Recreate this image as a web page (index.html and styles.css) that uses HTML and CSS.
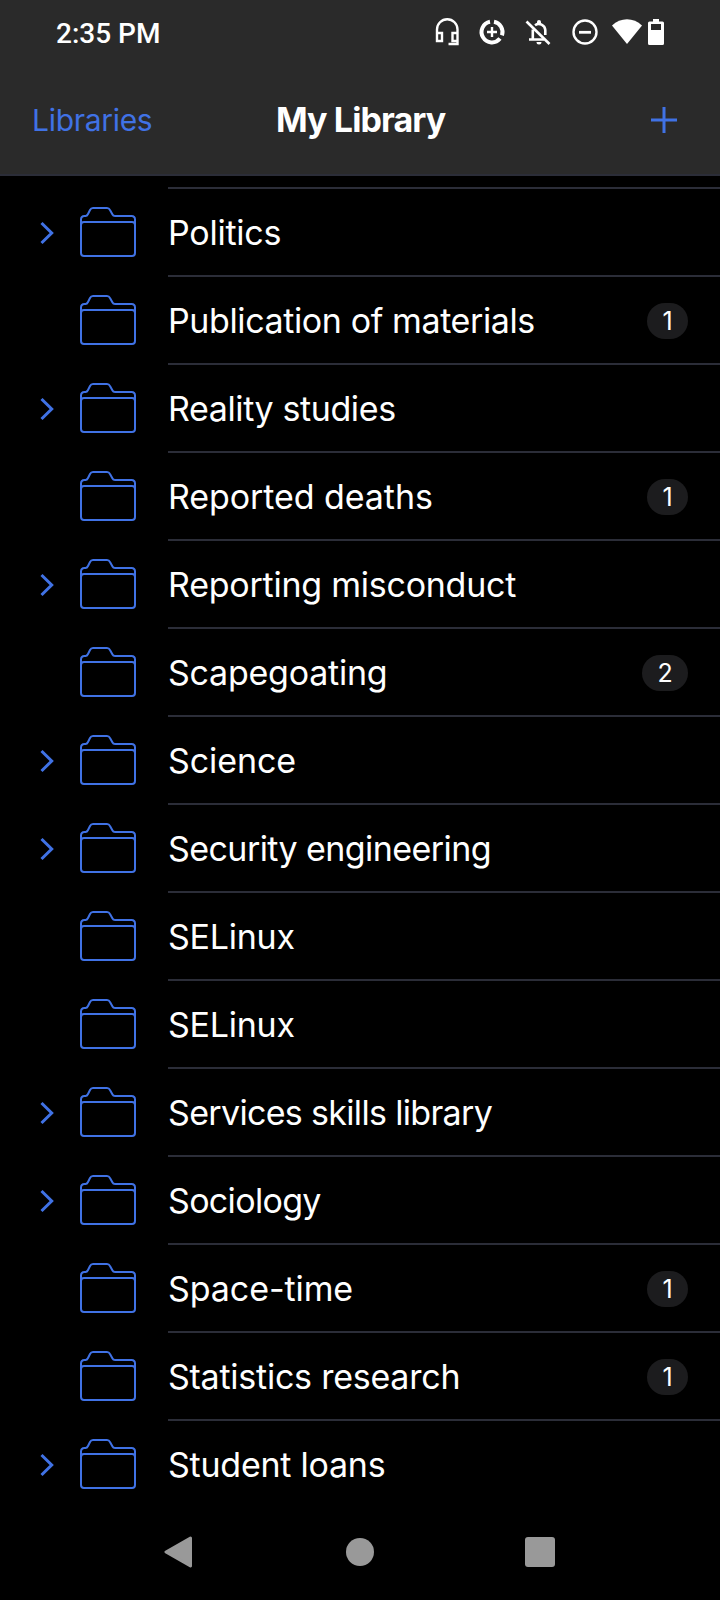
FILE: index.html
```html
<!DOCTYPE html>
<html lang="en">
<head>
<meta charset="utf-8">
<title>My Library</title>
<link rel="stylesheet" href="styles.css">
</head>
<body>
<header class="top">
  <div class="status">
    <span class="clock">2:35 PM</span>
    <svg class="status-icons" width="232" height="32" viewBox="434 16 232 32" fill="none" stroke="#fff">
      <path d="M437 39V29.500a10 10 0 0 1 20.500 0V44H448.500M437 33h5v8h-5zM457.500 33h-5v8h5" stroke-width="2.400"/>
      <path d="M494 21.800a10.400 10.400 0 0 1 8 13.500M500 38.600a10.400 10.400 0 1 1-10-16.800" stroke-width="4"/>
      <path d="M492 27v10M487 32h10" stroke-width="2.400"/>
      <path d="M526.500 21.500L549.500 44" stroke-width="2.600"/>
      <path d="M529 39.500H544M532.800 39V29.500M535 25.200A6.500 6.500 0 0 1 545.300 30V35" stroke-width="2.600"/>
      <path d="M537 22a2 2 0 0 1 4 0v2h-4zM536.500 42h5a2.500 2.500 0 0 1-5 0z" fill="#fff" stroke="none"/>
      <circle cx="585" cy="32" r="11.500" stroke-width="2.400"/>
      <path d="M579 32.300h12" stroke-width="2.800"/>
      <path d="M612 25.500C620.500 17.300 633.500 17.300 642 25.500L627 44z" fill="#fff" stroke="none"/>
      <path d="M653 19h6v2.500h3.500a1.500 1.500 0 0 1 1.500 1.500V43.500a1.500 1.500 0 0 1-1.500 1.500h-13a1.500 1.500 0 0 1-1.500-1.500V23a1.500 1.500 0 0 1 1.500-1.500H653zM651 24v6h10v-6z" fill="#fff" fill-rule="evenodd" stroke="none"/>
    </svg>
  </div>
  <nav class="bar">
    <a class="back">Libraries</a>
    <h1 class="title">My Library</h1>
    <svg class="add" width="26" height="26" viewBox="0 0 26 26"><path d="M13 0v26M0 13h26" stroke="#4072e5" stroke-width="3"/></svg>
  </nav>
</header>
<svg class="defs" width="0" height="0">
  <symbol id="folder" viewBox="0 0 56 50"><path d="M1 46V12.500Q1 9 4.500 9H5.500Q7 9 8 7L10 3Q11 1 13 1H27Q29 1 30 3L32.500 7.500Q33.200 9 35 9H51.500Q55 9 55 12.500V46Q55 49 52 49H4Q1 49 1 46zM1 18Q1 15 4 15H52Q55 15 55 18" fill="none" stroke="#4072e5" stroke-width="2"/></symbol>
  <symbol id="chevron" viewBox="0 0 14 24"><path d="M1.500 2L11.700 12L1.500 22" fill="none" stroke="#4072e5" stroke-width="3"/></symbol>
</svg>
<main class="list">
  <div class="row"><svg class="chevron"><use href="#chevron"/></svg><svg class="folder"><use href="#folder"/></svg><div class="cell"><span class="name snug">Politics</span></div></div>
  <div class="row"><span class="chevron"></span><svg class="folder"><use href="#folder"/></svg><div class="cell"><span class="name tight">Publication of materials</span><span class="badge">1</span></div></div>
  <div class="row"><svg class="chevron"><use href="#chevron"/></svg><svg class="folder"><use href="#folder"/></svg><div class="cell"><span class="name tight">Reality studies</span></div></div>
  <div class="row"><span class="chevron"></span><svg class="folder"><use href="#folder"/></svg><div class="cell"><span class="name">Reported deaths</span><span class="badge">1</span></div></div>
  <div class="row"><svg class="chevron"><use href="#chevron"/></svg><svg class="folder"><use href="#folder"/></svg><div class="cell"><span class="name snug">Reporting misconduct</span></div></div>
  <div class="row"><span class="chevron"></span><svg class="folder"><use href="#folder"/></svg><div class="cell"><span class="name snug">Scapegoating</span><span class="badge wide">2</span></div></div>
  <div class="row"><svg class="chevron"><use href="#chevron"/></svg><svg class="folder"><use href="#folder"/></svg><div class="cell"><span class="name">Science</span></div></div>
  <div class="row"><svg class="chevron"><use href="#chevron"/></svg><svg class="folder"><use href="#folder"/></svg><div class="cell"><span class="name tighter">Security engineering</span></div></div>
  <div class="row"><span class="chevron"></span><svg class="folder"><use href="#folder"/></svg><div class="cell"><span class="name snug">SELinux</span></div></div>
  <div class="row"><span class="chevron"></span><svg class="folder"><use href="#folder"/></svg><div class="cell"><span class="name snug">SELinux</span></div></div>
  <div class="row"><svg class="chevron"><use href="#chevron"/></svg><svg class="folder"><use href="#folder"/></svg><div class="cell"><span class="name tightest">Services skills library</span></div></div>
  <div class="row"><svg class="chevron"><use href="#chevron"/></svg><svg class="folder"><use href="#folder"/></svg><div class="cell"><span class="name tightest">Sociology</span></div></div>
  <div class="row"><span class="chevron"></span><svg class="folder"><use href="#folder"/></svg><div class="cell"><span class="name">Space-time</span><span class="badge">1</span></div></div>
  <div class="row"><span class="chevron"></span><svg class="folder"><use href="#folder"/></svg><div class="cell"><span class="name snug">Statistics research</span><span class="badge">1</span></div></div>
  <div class="row"><svg class="chevron"><use href="#chevron"/></svg><svg class="folder"><use href="#folder"/></svg><div class="cell"><span class="name snug">Student loans</span></div></div>
</main>
<footer class="keys">
  <svg width="28" height="32" viewBox="0 0 28 32"><path d="M26 2L1.500 16L26 30z" transform="translate(.5 0)" fill="#999" stroke="#999" stroke-width="3" stroke-linejoin="round"/></svg>
  <span class="home"></span>
  <span class="recent"></span>
</footer>
</body>
</html>
```
FILE: styles.css
```css
* { box-sizing: border-box; }
body {
  margin: 0;
  width: 720px;
  height: 1600px;
  overflow: hidden;
  background: #000;
  color: #fff;
  font-family: Inter, "Liberation Sans", sans-serif;
  display: flex;
  flex-direction: column;
}
svg { display: block; flex: none; }
.defs { position: absolute; }
.top {
  height: 176px;
  background: #2a2a2a;
  border-bottom: 2px solid #2b2d38;
}
.status {
  height: 64px;
  padding: 0 54px 0 56px;
  display: flex;
  align-items: center;
  justify-content: space-between;
}
.clock {
  font: 500 28px/32px Roboto, sans-serif;
  padding-top: 4px;
}
.bar {
  height: 112px;
  padding: 0 43px 0 32px;
  display: grid;
  grid-template-columns: 244px 1fr auto;
  align-items: center;
}
.back { font-size: 30px; line-height: 40px; color: #4072e5; letter-spacing: -0.3px; }
.title {
  margin: 0;
  font-size: 34px;
  line-height: 40px;
  font-weight: 700;
  letter-spacing: -0.9px;
}
.list { padding-top: 11px; }
.row { height: 88px; display: flex; align-items: center; }
.chevron { width: 14px; height: 24px; margin: 4px 26px 0 40px; flex: none; }
.folder { width: 56px; height: 50px; margin: 2px 32px 0 0; }
.cell {
  flex: 1;
  height: 88px;
  border-top: 2px solid #2b2d38;
  padding-right: 32px;
  display: flex;
  align-items: center;
  justify-content: space-between;
}
.name {
  font-size: 34px;
  line-height: 44px;
  padding-top: 2px;
  white-space: nowrap;
  letter-spacing: -0.08px;
}
.snug { letter-spacing: -0.24px; }
.tight { letter-spacing: -0.39px; }
.tighter { letter-spacing: -0.57px; }
.tightest { letter-spacing: -0.67px; }
.badge {
  width: 41px;
  height: 36px;
  margin-top: 2px;
  border-radius: 18px;
  background: #1c1c1e;
  font-size: 25px;
  line-height: 36px;
  text-align: center;
}
.wide { width: 46px; }
.keys {
  height: 90px;
  padding: 0 165px 0 164px;
  display: grid;
  grid-template-columns: 182px 179px 30px;
  align-items: center;
}
.home { width: 28px; height: 28px; border-radius: 50%; background: #999; }
.recent { width: 30px; height: 30px; border-radius: 3px; background: #999; }
```
